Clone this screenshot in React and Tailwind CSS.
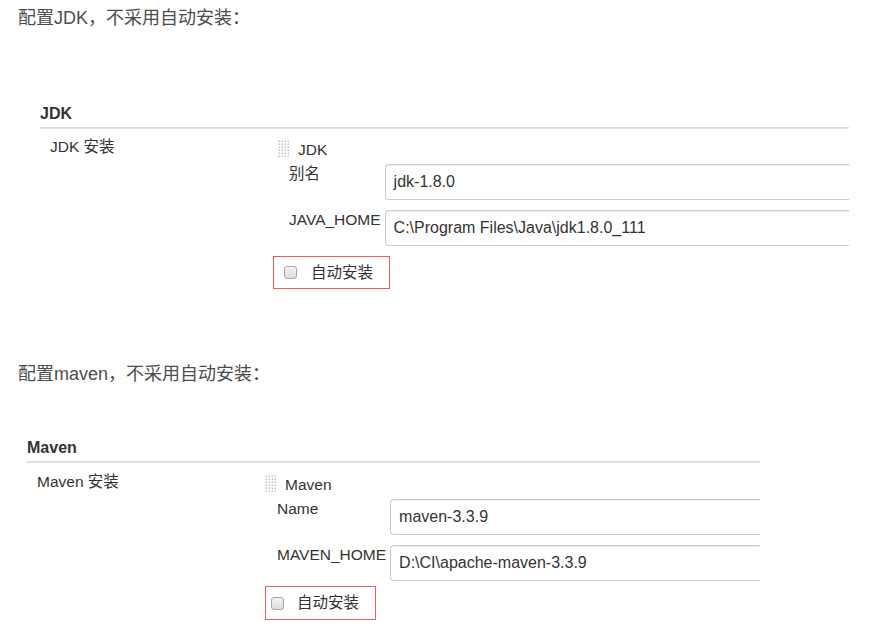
import React from "react";

function Handle() {
  const dots = [];
  for (let r = 0; r < 6; r++) {
    for (let c = 0; c < 4; c++) {
      dots.push(<rect key={`${r}-${c}`} x={c * 3 + 0.5} y={r * 3 + 0.5} width="1.5" height="1.5" fill="#c2c2c2" />);
    }
  }
  return (
    <svg width="12" height="18" viewBox="0 0 12 18" className="shrink-0">
      {dots}
    </svg>
  );
}

function Field({ value }) {
  return (
    <div className="h-[36px] flex items-center pl-[8px] border border-r-0 border-[#cccccc] rounded-l-[4px] shadow-[inset_0_1px_1px_rgba(0,0,0,0.075)] text-[16px] text-[#333] whitespace-nowrap">
      {value}
    </div>
  );
}

function Checkbox() {
  return <span className="block w-[13px] h-[13px] rounded-[3px] border border-[#a6a6a6] bg-[linear-gradient(#f2f2f2,#dedede)] shrink-0" />;
}

function Section({ title, sub, item, rows, width, gridPl, boxClass, boxGap, lineMt, labelMt }) {
  return (
    <section className={width}>
      <h3 className="text-[16px] leading-[20px] font-bold text-[#333]">{title}</h3>
      <div className={`${lineMt} h-[2px] bg-[#e4e4e4] border-t border-[#dadada]`} />
      <div className={`flex ${labelMt}`}>
        <div className="w-[238px] shrink-0 pl-[10px] text-[15.5px] leading-[18px] text-[#333]">{sub}</div>
        <div className="flex-1 min-w-0 pt-[2px]">
          <div className="flex items-center gap-[8px] h-[18px]">
            <Handle />
            <span className="text-[15.5px] leading-[18px] text-[#333] pt-[2px]">{item}</span>
          </div>
          <div className={`mt-[6px] ${gridPl} grid grid-cols-[auto_1fr] gap-x-[4px] gap-y-[10px]`}>
            {rows.map(([label, value]) => (
              <React.Fragment key={label}>
                <div className="text-[15.5px] leading-[18px] text-[#333] pt-[1px]">{label}</div>
                <Field value={value} />
              </React.Fragment>
            ))}
          </div>
          <div className={`${boxClass} flex items-center border-[1.5px] border-[#e95d5d]`}>
            <Checkbox />
            <span className={`${boxGap} text-[15.5px] leading-[18px] text-[#333]`}>自动安装</span>
          </div>
        </div>
      </div>
    </section>
  );
}

export default function App() {
  return (
    <div className="w-[874px] h-[634px] bg-white overflow-hidden font-['Liberation_Sans','Noto_Sans_CJK_SC',sans-serif]">
      <p className="pt-[6px] pl-[18px] text-[18px] leading-[24px] text-[#4d4d4d]">配置JDK，不采用自动安装：</p>
      <div className="mt-[74px] ml-[40px]">
        <Section
          title="JDK"
          sub="JDK 安装"
          item="JDK"
          width="w-[809px]"
          gridPl="pl-[11px]"
          lineMt="mt-[3px]"
          labelMt="mt-[9px]"
          rows={[
            ["别名", "jdk-1.8.0"],
            ["JAVA_HOME", "C:\\Program Files\\Java\\jdk1.8.0_111"],
          ]}
          boxClass="mt-[10px] ml-[-5px] w-[117px] h-[33px] pl-[10px]"
          boxGap="ml-[14px]"
        />
      </div>
      <p className="mt-[73px] pl-[18px] text-[18px] leading-[24px] text-[#4d4d4d]">配置maven，不采用自动安装：</p>
      <div className="mt-[52px] ml-[27px]">
        <Section
          title="Maven"
          sub="Maven 安装"
          item="Maven"
          width="w-[733px]"
          gridPl="pl-[12px]"
          lineMt="mt-[3px]"
          labelMt="mt-[10px]"
          rows={[
            ["Name", "maven-3.3.9"],
            ["MAVEN_HOME", "D:\\CI\\apache-maven-3.3.9"],
          ]}
          boxClass="mt-[5px] w-[111px] h-[34px] pl-[5px]"
          boxGap="ml-[13px]"
        />
      </div>
    </div>
  );
}
